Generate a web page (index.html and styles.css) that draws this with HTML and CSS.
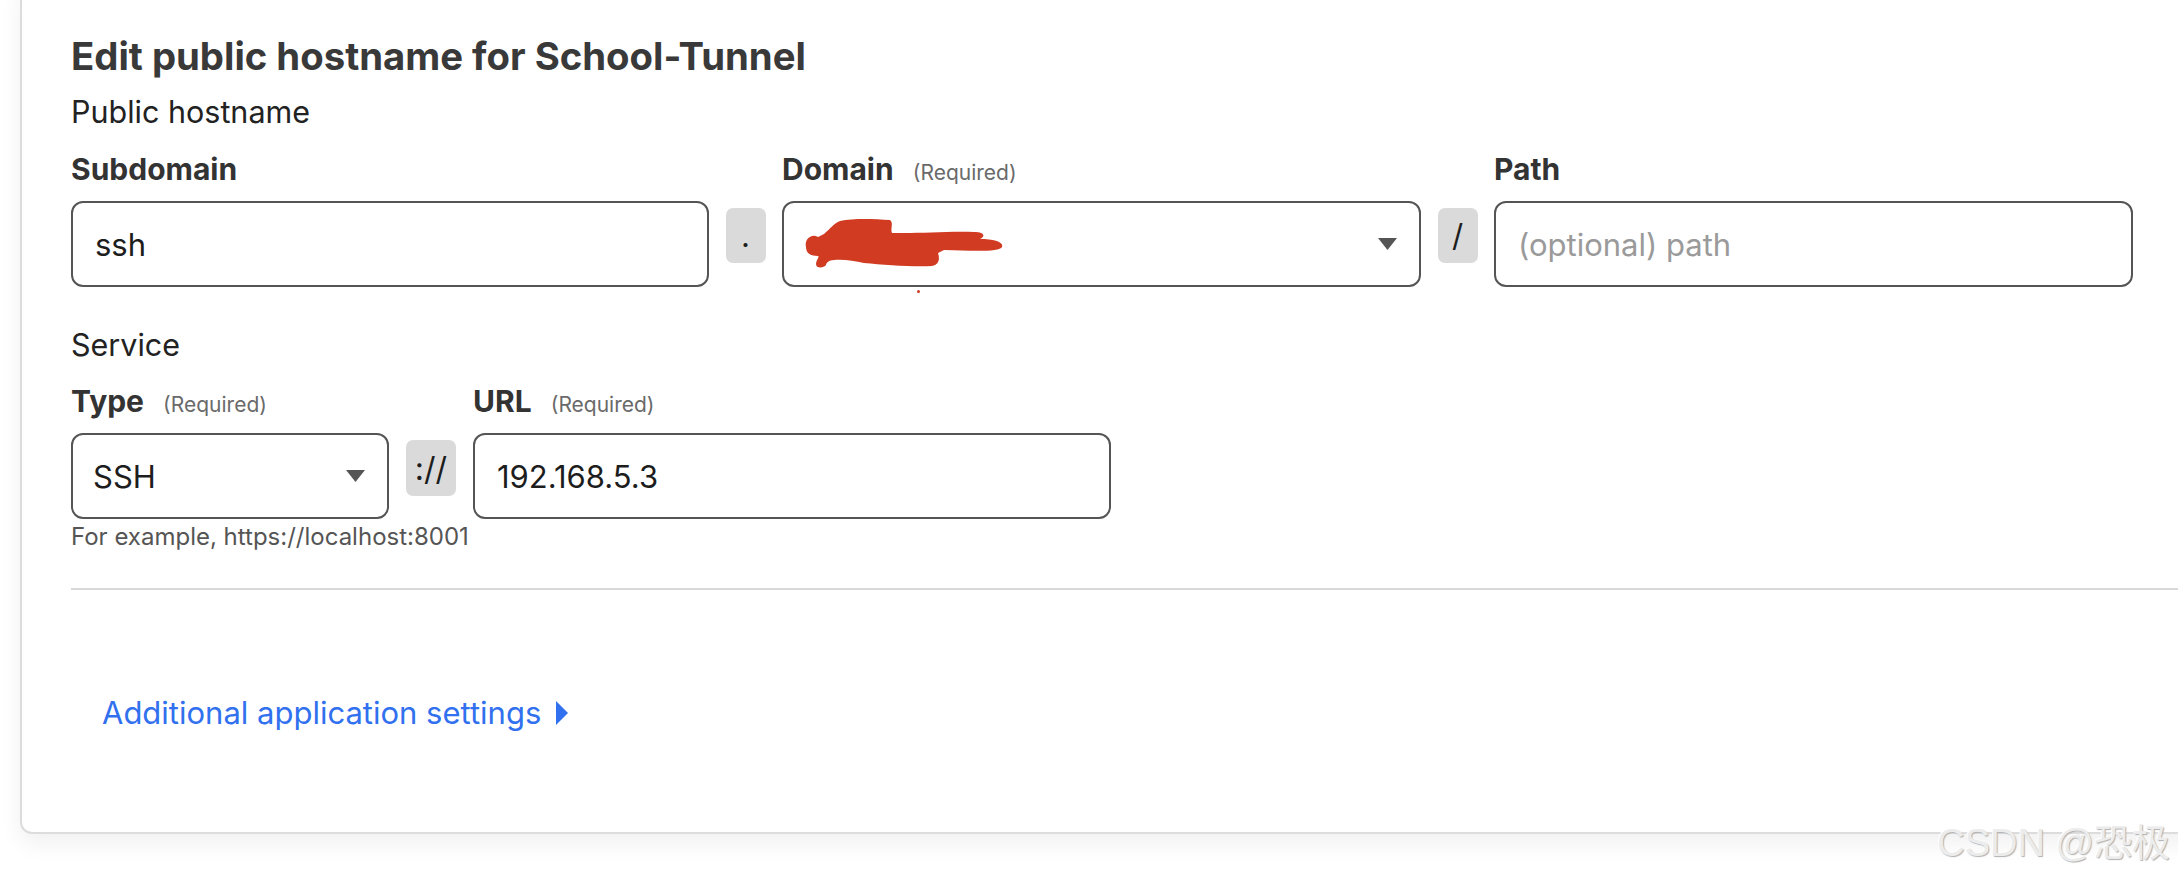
FILE: index.html
```html
<!DOCTYPE html>
<html lang="en">
<head>
<meta charset="utf-8">
<title>Edit public hostname</title>
<link rel="stylesheet" href="styles.css">
</head>
<body>
<div class="card">
  <h1 class="title">Edit public hostname for School-Tunnel</h1>
  <div class="section-label">Public hostname</div>
  <div class="grid grid-host">
    <div class="label">Subdomain</div>
    <div></div>
    <div class="label">Domain <span class="req">(Required)</span></div>
    <div></div>
    <div class="label">Path</div>

    <div class="field"><span class="value">ssh</span></div>
    <div class="sep">.</div>
    <div class="field select">
      <svg class="redact" width="202" height="52" viewBox="0 0 202 52"><path fill="#d13b22" d="M2 28 C0 20 8 14 14 18 L20 15 C26 10 30 4 36 2 C50 -1 70 0 86 1 C90 4 86 10 88 14 L100 14 C120 14 150 12 170 13 C180 13 182 17 176 20 C190 20 200 23 198 28 C196 33 170 32 140 31 L134 34 C136 40 135 46 128 47 C110 48 80 46 60 44 C50 42 40 40 30 41 C25 41 22 44 22 46 C20 49 12 50 12 45 C12 41 16 38 14 37 C6 37 2 34 2 28 Z"/></svg>
      <span class="reddot"></span>
      <svg class="caret" width="19" height="12" viewBox="0 0 19 12"><polygon points="0,0 19,0 9.5,12" fill="#555"/></svg>
    </div>
    <div class="sep">/</div>
    <div class="field"><span class="placeholder">(optional) path</span></div>
  </div>

  <div class="section-label service">Service</div>
  <div class="grid grid-service">
    <div class="label">Type <span class="req">(Required)</span></div>
    <div></div>
    <div class="label">URL <span class="req">(Required)</span></div>

    <div class="field select type"><span class="value">SSH</span>
      <svg class="caret" width="19" height="12" viewBox="0 0 19 12"><polygon points="0,0 19,0 9.5,12" fill="#555"/></svg>
    </div>
    <div class="sep proto">://</div>
    <div class="field"><span class="value">192.168.5.3</span></div>
  </div>
  <div class="hint">For example, https://localhost:8001</div>
  <hr class="divider">
  <a class="more" href="#">Additional application settings <svg class="more-caret" width="12" height="24" viewBox="0 0 12 24"><polygon points="0,0 12,12 0,24" fill="#3170ee"/></svg></a>
</div>
<div class="watermark">CSDN @恐极</div>
</body>
</html>
```
FILE: styles.css
```css
html, body {
  margin: 0;
  padding: 0;
  background: #ffffff;
  overflow: hidden;
  width: 2178px;
  height: 882px;
}

body {
  font-family: Inter, "Noto Sans", "Liberation Sans", sans-serif;
  color: #333;
  position: relative;
}

.card {
  margin: -20px -80px 0 20px;
  padding: 52px 0 101px 49px;
  border: 2px solid #dcdcdc;
  border-radius: 12px;
  background: #fff;
  box-shadow: 0 10px 22px rgba(0, 0, 0, 0.06);
}

.title {
  margin: 0;
  font-size: 38.3px;
  line-height: 44px;
  font-weight: 700;
  color: #393939;
}

.section-label {
  margin-top: 16px;
  font-size: 30.5px;
  line-height: 36px;
  color: #222;
}

.section-label.service {
  margin-top: 40px;
}

.grid {
  display: grid;
  grid-template-rows: 36px 86px;
  row-gap: 14px;
  margin-top: 21px;
}

.grid-host {
  grid-template-columns: 638px 40px 639px 40px 639px;
  column-gap: 16.5px;
}

.grid-service {
  margin-top: 20px;
  grid-template-columns: 318px 50px 638px;
  column-gap: 17px;
}

.label {
  font-size: 30px;
  line-height: 36px;
  font-weight: 700;
  color: #333;
  white-space: nowrap;
}

.req {
  font-size: 21px;
  font-weight: 400;
  color: #6a6a6a;
  margin-left: 12px;
}

.field {
  box-sizing: border-box;
  height: 86px;
  border: 2px solid #555;
  border-radius: 12px;
  padding: 0 22px;
  display: flex;
  align-items: center;
  font-size: 31px;
  color: #1d1d1d;
  position: relative;
}

.field.type {
  padding-left: 20px;
}

.placeholder {
  color: #9a9a9a;
}

.select {
  justify-content: space-between;
}

.select .caret {
  margin-left: auto;
}

.redact {
  margin-left: -2px;
  margin-top: 2px;
}

.reddot {
  position: absolute;
  left: 133px;
  bottom: -8px;
  width: 3px;
  height: 3px;
  border-radius: 50%;
  background: #d13b22;
}

.sep {
  align-self: start;
  margin-top: 7px;
  height: 55px;
  background: #dadada;
  border-radius: 7px;
  display: flex;
  align-items: center;
  justify-content: center;
  font-size: 31px;
  color: #1d1d1d;
}

.sep.proto {
  height: 56px;
  font-size: 32px;
}

.hint {
  margin-top: 5px;
  font-size: 24px;
  line-height: 26px;
  color: #555;
}

.divider {
  margin: 38px 0 0 0;
  border: 0;
  height: 2px;
  background: #d8d8d8;
}

.more {
  display: inline-flex;
  align-items: center;
  gap: 15px;
  margin: 105px 0 0 31px;
  font-size: 31px;
  line-height: 36px;
  color: #3170ee;
  text-decoration: none;
}

.watermark {
  position: absolute;
  right: 8px;
  top: 821px;
  font-family: "Liberation Sans", "Noto Sans CJK SC", sans-serif;
  font-size: 38px;
  line-height: 44px;
  color: #ececec;
  text-shadow: 1px 1px 1px #b0b0b0, -1px -1px 0 #fff;
}
```
